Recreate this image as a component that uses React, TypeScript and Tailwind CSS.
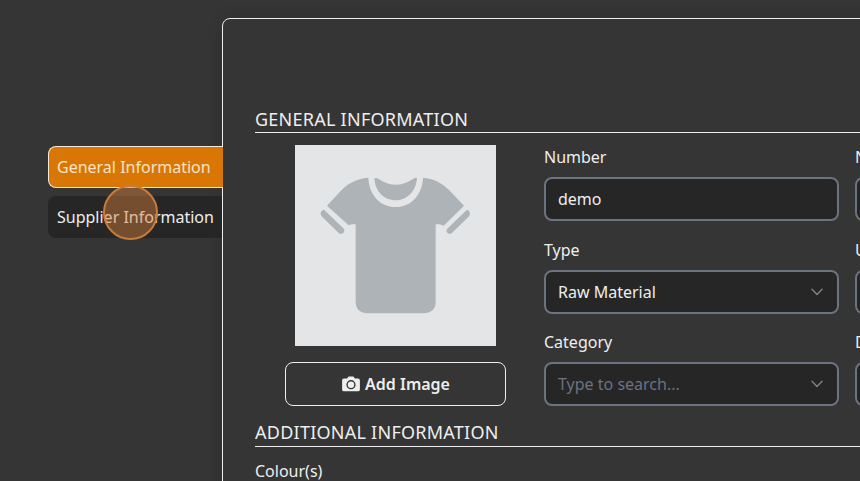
import type { ReactNode } from "react";

function Shirt() {
  return (
    <svg viewBox="0 0 603 603" className="h-[201px] w-[201px] bg-[#e4e5e7]" fill="#aeb3b7">
      <path d="M220 98 C184 101 157 116 135 140 L96 182 L161 241 L170 238 H182 V475 Q184 503 214 505 H390 Q420 503 422 475 V238 H434 L446 242 L507 182 L463 136 C440 113 415 100 384 98 C382 148 350 186 302 186 C254 186 222 148 220 98Z" />
      <path d="M238 100 Q243 97 250 101 Q302 137 355 101 Q362 97 366 99 C364 137 337 166 302 166 C267 166 240 139 238 100Z" />
      <path d="M77 205 Q78 196 87 194 L147 252 Q151 264 138 267 L132 265 L79 213Z" />
      <path d="M525 205 Q524 196 516 194 L456 252 Q451 264 464 267 L470 265 L523 213Z" />
    </svg>
  );
}

function Camera() {
  return (
    <svg viewBox="0 0 18 16" className="h-4 w-[18px]" fill="#eeeeee">
      <path fillRule="evenodd" d="M5.8 1.4 Q6.2 .5 7.2 .5 H10.8 Q11.8 .5 12.2 1.4 L12.9 2.5 H16 Q17.9 2.5 17.9 4.4 V13.4 Q17.9 15.3 16 15.3 H2 Q.1 15.3 .1 13.4 V4.4 Q.1 2.5 2 2.5 H5.1Z M9 4.1 A4.6 4.6 0 1 0 9 13.3 A4.6 4.6 0 1 0 9 4.1Z M9 5.5 A3.2 3.2 0 1 1 9 11.9 A3.2 3.2 0 1 1 9 5.5Z" />
    </svg>
  );
}

function Chevron() {
  return (
    <svg viewBox="0 0 12 8" className="h-2 w-3" fill="none" stroke="#7b808a" strokeWidth="1.5" strokeLinecap="round" strokeLinejoin="round">
      <path d="M1 1.2 L6 6.4 L11 1.2" />
    </svg>
  );
}

function Field({ label, children, select }: { label: string; children?: ReactNode; select?: boolean }) {
  return (
    <div>
      <div className="h-8 leading-6">{label}</div>
      <div className="flex h-11 items-center justify-between rounded-lg border-2 border-[#6b7280] bg-[#262626] pr-[14px] pl-3">
        <span>{children}</span>
        {select && <Chevron />}
      </div>
    </div>
  );
}

function Heading({ children, leading }: { children: string; leading: string }) {
  return <h2 className={`h-7 border-b border-[#eeeeee] text-lg tracking-[0.25px] ${leading}`}>{children}</h2>;
}

export default function App() {
  return (
    <div className="relative flex h-[481px] w-[860px] overflow-hidden bg-[#353535] pt-[18px] font-['Noto_Sans',sans-serif] text-base text-[#eeeeee]">
      <nav className="z-10 flex w-[222px] shrink-0 flex-col gap-2 pt-32 pl-12">
        <div className="-mr-px flex h-[42px] items-center rounded-l-lg border border-r-0 border-[#f5ead9] bg-[#d97706] pl-2 whitespace-nowrap text-[#f8e3c4]">
          General Information
        </div>
        <div className="flex h-[42px] items-center rounded-l-lg bg-[#262626] pl-[9px] whitespace-nowrap">Supplier Information</div>
      </nav>
      <main className="h-[520px] w-[900px] shrink-0 rounded-tl-lg border border-[#eeeeee] pt-[86px] pl-8 shadow-[0_0_16px_rgba(0,0,0,0.12)]">
        <Heading leading="leading-[28px]">GENERAL INFORMATION</Heading>
        <div className="flex h-[286px] gap-2 pt-3">
          <div className="flex w-[281px] shrink-0 flex-col items-center gap-4">
            <Shirt />
            <button className="flex h-11 w-[221px] items-center justify-center gap-[5px] rounded-lg border border-[#eeeeee] pl-px font-semibold">
              <Camera />
              Add Image
            </button>
          </div>
          <div className="grid shrink-0 grid-cols-[295px_296px] grid-rows-[93px_92px_92px] content-start gap-x-4">
            <Field label="Number">demo</Field>
            <Field label="Name" />
            <Field label="Type" select>Raw Material</Field>
            <Field label="Unit" />
            <Field label="Category" select><span className="text-[#6b7280]">Type to search...</span></Field>
            <Field label="Description" />
          </div>
        </div>
        <Heading leading="leading-[27px]">ADDITIONAL INFORMATION</Heading>
        <div className="pt-3 leading-6">Colour(s)</div>
      </main>
      <div className="absolute top-[185px] left-[103px] z-20 h-[55px] w-[55px] rounded-full border-2 border-[#c77b3d] bg-[#d87f3c]/45" />
    </div>
  );
}
